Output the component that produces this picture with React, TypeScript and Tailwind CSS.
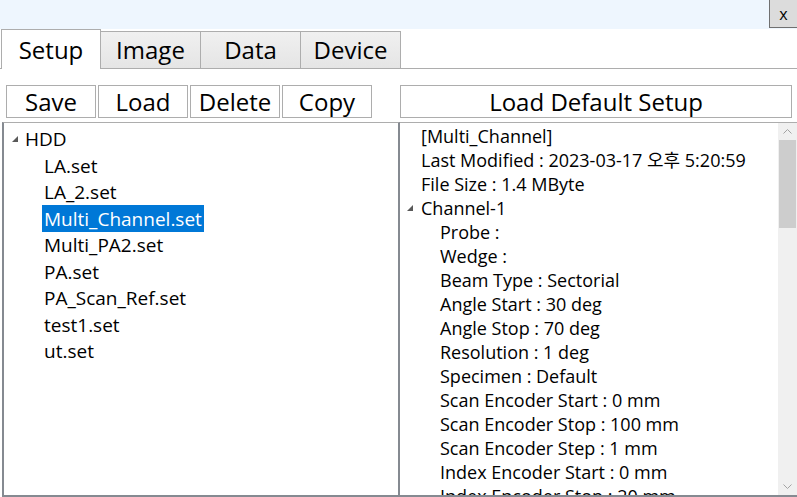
import React from "react";

const files = [
  "LA.set",
  "LA_2.set",
  "Multi_Channel.set",
  "Multi_PA2.set",
  "PA.set",
  "PA_Scan_Ref.set",
  "test1.set",
  "ut.set",
];

const channelProps = [
  "Probe :",
  "Wedge :",
  "Beam Type : Sectorial",
  "Angle Start : 30 deg",
  "Angle Stop : 70 deg",
  "Resolution : 1 deg",
  "Specimen : Default",
  "Scan Encoder Start : 0 mm",
  "Scan Encoder Stop : 100 mm",
  "Scan Encoder Step : 1 mm",
  "Index Encoder Start : 0 mm",
  "Index Encoder Stop : 20 mm",
];

const tabs = ["Setup", "Image", "Data", "Device"];
const actions = ["Save", "Load", "Delete", "Copy"];

const Expander = () => (
  <svg width="6" height="6" viewBox="0 0 6 6" className="shrink-0">
    <polygon points="6,0 6,6 0,6" fill="#595959" />
  </svg>
);

const App = () => {
  return (
    <div
      className="w-[797px] h-[497px] flex flex-col overflow-hidden bg-white text-black"
      style={{ fontFamily: '"Open Sans", "Noto Sans CJK KR", sans-serif' }}
    >
      {/* title bar */}
      <div className="h-[29px] shrink-0 flex justify-end bg-[#eef6fe]">
        <button className="w-[28px] h-[28px] bg-[#dcdcdc] border-l border-b border-[#707070] text-[16px] leading-none">
          x
        </button>
      </div>

      {/* tab strip */}
      <div className="h-[40px] shrink-0 flex items-end pl-px border-b border-[#adadad]">
        {tabs.map((tab, i) =>
          i === 0 ? (
            <div
              key={tab}
              className="w-[100px] h-[40px] -mb-px bg-white border border-b-0 border-[#adadad] flex items-center justify-center text-[24px]"
            >
              {tab}
            </div>
          ) : (
            <div
              key={tab}
              className="w-[100px] h-[37px] bg-gradient-to-b from-[#f0f0f0] to-[#e5e5e5] border border-l-0 border-b-0 border-[#adadad] flex items-center justify-center text-[24px]"
            >
              {tab}
            </div>
          )
        )}
      </div>

      {/* action buttons */}
      <div className="mt-[16px] h-[33px] shrink-0 flex">
        <div className="ml-[6px] w-[394px] flex gap-[2px]">
          {actions.map((a) => (
            <button
              key={a}
              className="w-[90px] h-[33px] bg-white border border-[#adadad] text-[24px] leading-none"
            >
              {a}
            </button>
          ))}
        </div>
        <button className="w-[392px] h-[33px] bg-white border border-[#adadad] text-[24px] leading-none">
          Load Default Setup
        </button>
      </div>

      {/* panels */}
      <div className="mt-[4px] flex-1 min-h-0 flex">
        {/* file tree */}
        <div className="ml-[2px] w-[398px] border-t border-t-[#adadad] border-l-2 border-r-2 border-b-2 border-l-[#858a91] border-r-[#858a91] border-b-[#858a91] pt-[3px] text-[19px]">
          <div className="h-[26.5px] flex items-center">
            <div className="w-[21px] pl-[8px] flex items-center">
              <Expander />
            </div>
            <span>HDD</span>
          </div>
          <div className="pl-[38px]">
            {files.map((f, i) => (
              <div key={f} className="h-[26.5px] flex items-center">
                <span
                  className={
                    i === 2
                      ? "bg-[#0078d7] text-white px-[2px] h-[27px] flex items-center"
                      : "px-[2px]"
                  }
                >
                  {f}
                </span>
              </div>
            ))}
          </div>
        </div>

        {/* setup details */}
        <div className="flex-1 min-w-0 flex border-t border-t-[#adadad] border-b-2 border-b-[#858a91]">
          <div className="flex-1 min-w-0 overflow-hidden pt-[1px] text-[18px] whitespace-nowrap">
            <div className="pl-[21px] h-[24px] flex items-center">[Multi_Channel]</div>
            <div className="pl-[21px] h-[24px] flex items-center">
              Last Modified : 2023-03-17 오후 5:20:59
            </div>
            <div className="pl-[21px] h-[24px] flex items-center">File Size : 1.4 MByte</div>
            <div className="h-[24px] flex items-center">
              <div className="w-[21px] pl-[7px] flex items-center">
                <Expander />
              </div>
              <span>Channel-1</span>
            </div>
            {channelProps.map((p) => (
              <div key={p} className="pl-[40px] h-[24px] flex items-center">
                {p}
              </div>
            ))}
          </div>

          {/* vertical scrollbar */}
          <div className="w-[19px] shrink-0 bg-[#f0f0f0] flex flex-col">
            <div className="h-[17px] flex items-center justify-center">
              <svg width="9" height="5" viewBox="0 0 9 5">
                <polyline points="0.5,4.5 4.5,0.5 8.5,4.5" fill="none" stroke="#a3a3a3" strokeWidth="1" />
              </svg>
            </div>
            <div className="h-[88px] mx-px bg-[#cdcdcd]" />
            <div className="flex-1" />
            <div className="h-[17px] flex items-center justify-center">
              <svg width="9" height="5" viewBox="0 0 9 5">
                <polyline points="0.5,0.5 4.5,4.5 8.5,0.5" fill="none" stroke="#a3a3a3" strokeWidth="1" />
              </svg>
            </div>
          </div>
        </div>
      </div>
    </div>
  );
};

export default App;
